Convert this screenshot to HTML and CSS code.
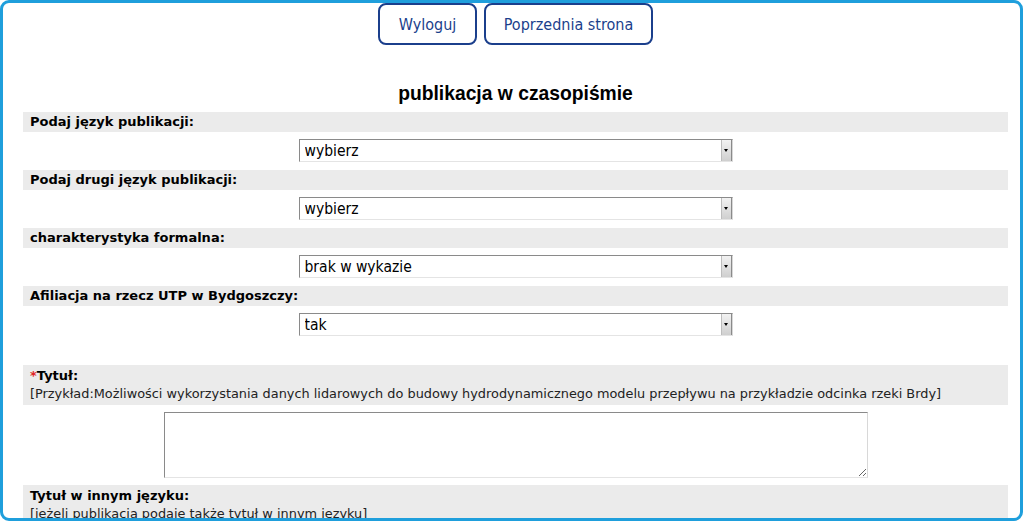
FILE: index.html
```html
<!DOCTYPE html>
<html lang="pl">
<head>
<meta charset="utf-8">
<title>publikacja w czasopiśmie</title>
<link rel="stylesheet" href="styles.css">
</head>
<body>
<div class="frame">
  <div class="content">
    <div class="nav">
      <button class="navbtn btn-logout" type="button">Wyloguj</button>
      <button class="navbtn btn-back" type="button">Poprzednia strona</button>
    </div>
    <h1 class="title">publikacja w czasopiśmie</h1>

    <div class="label">Podaj język publikacji:</div>
    <div class="field">
      <div class="sel"><select><option>wybierz</option></select><span class="arrow"></span></div>
    </div>

    <div class="label">Podaj drugi język publikacji:</div>
    <div class="field">
      <div class="sel"><select><option>wybierz</option></select><span class="arrow"></span></div>
    </div>

    <div class="label">charakterystyka formalna:</div>
    <div class="field">
      <div class="sel"><select><option>brak w wykazie</option></select><span class="arrow"></span></div>
    </div>

    <div class="label">Afiliacja na rzecz UTP w Bydgoszczy:</div>
    <div class="field">
      <div class="sel"><select><option>tak</option></select><span class="arrow"></span></div>
    </div>

    <div class="label label-tall label-gap"><span class="req">*</span>Tytuł:<div class="hint">[Przykład:Możliwości wykorzystania danych lidarowych do budowy hydrodynamicznego modelu przepływu na przykładzie odcinka rzeki Brdy]</div></div>
    <div class="field field-area">
      <textarea class="area"></textarea>
    </div>

    <div class="label label-tall">Tytuł w innym języku:<div class="hint">[jeżeli publikacja podaje także tytuł w innym języku]</div></div>
    <div class="field field-area">
      <textarea class="area"></textarea>
    </div>
  </div>
</div>
</body>
</html>
```
FILE: styles.css
```css
html, body {
  margin: 0;
  padding: 0;
  background: #ffffff;
}
.frame {
  box-sizing: border-box;
  width: 1023px;
  height: 521px;
  border: 3px solid #1f9fdc;
  border-radius: 9px;
  overflow: hidden;
  background: #ffffff;
}
.content {
  padding: 0 12px 0 20px;
}
.nav {
  display: flex;
  justify-content: center;
  gap: 7px;
  height: 42px;
}
.navbtn {
  box-sizing: border-box;
  height: 42px;
  border: 2px solid #1b3f8c;
  border-radius: 8px;
  background: #ffffff;
  color: #1b3f8c;
  font-family: "DejaVu Sans Condensed", "DejaVu Sans", sans-serif;
  font-size: 16px;
  padding: 0;
}
.btn-logout { width: 99px; }
.btn-back { width: 169px; }
.title {
  margin: 38px 0 7px;
  height: 22px;
  line-height: 22px;
  text-align: center;
  font-family: "Liberation Sans", Arial, sans-serif;
  font-weight: bold;
  font-size: 19.3px;
  color: #000;
}
.label {
  background: #ebebeb;
  height: 20px;
  line-height: 20px;
  padding: 0 7px;
  font-family: "DejaVu Sans", Verdana, sans-serif;
  font-weight: bold;
  font-size: 13px;
  color: #000;
}
.label-tall {
  box-sizing: border-box;
  height: 40px;
  line-height: 18px;
  padding-top: 2px;
}
.label-gap {
  margin-top: 21px;
}
.req {
  color: #e02424;
}
.hint {
  font-weight: normal;
  font-size: 12.88px;
  color: #222;
  white-space: nowrap;
}
.field {
  display: flex;
  justify-content: center;
  padding: 7px 0 8px;
}
.field-area {
  padding: 7px 0 7px;
}
.sel {
  position: relative;
  width: 434px;
  height: 23px;
}
.sel select {
  -webkit-appearance: none;
  appearance: none;
  box-sizing: border-box;
  width: 100%;
  height: 100%;
  margin: 0;
  padding: 0 0 0 5px;
  border: 1px solid #8a8a8a;
  border-right-color: #d8d8d8;
  border-bottom-color: #e4e4e4;
  border-radius: 0;
  background: #fff;
  font-family: "DejaVu Sans Condensed", "DejaVu Sans", sans-serif;
  font-size: 15.5px;
  color: #000;
}
.sel .arrow {
  position: absolute;
  right: 1px;
  top: 1px;
  bottom: 1px;
  width: 9px;
  background: linear-gradient(#f2f2f2, #cfcfcf);
  border-left: 1px solid #bdbdbd;
  border-right: 1px solid #8a8a8a;
}
.sel .arrow::after {
  content: "";
  position: absolute;
  left: 2px;
  top: 9px;
  border-left: 2.5px solid transparent;
  border-right: 2.5px solid transparent;
  border-top: 3px solid #000;
}
.area {
  box-sizing: border-box;
  width: 704px;
  height: 66px;
  margin: 0;
  border: 1px solid #8a8a8a;
  border-right-color: #d8d8d8;
  border-bottom-color: #e4e4e4;
  resize: both;
  background: #fff;
}
```
